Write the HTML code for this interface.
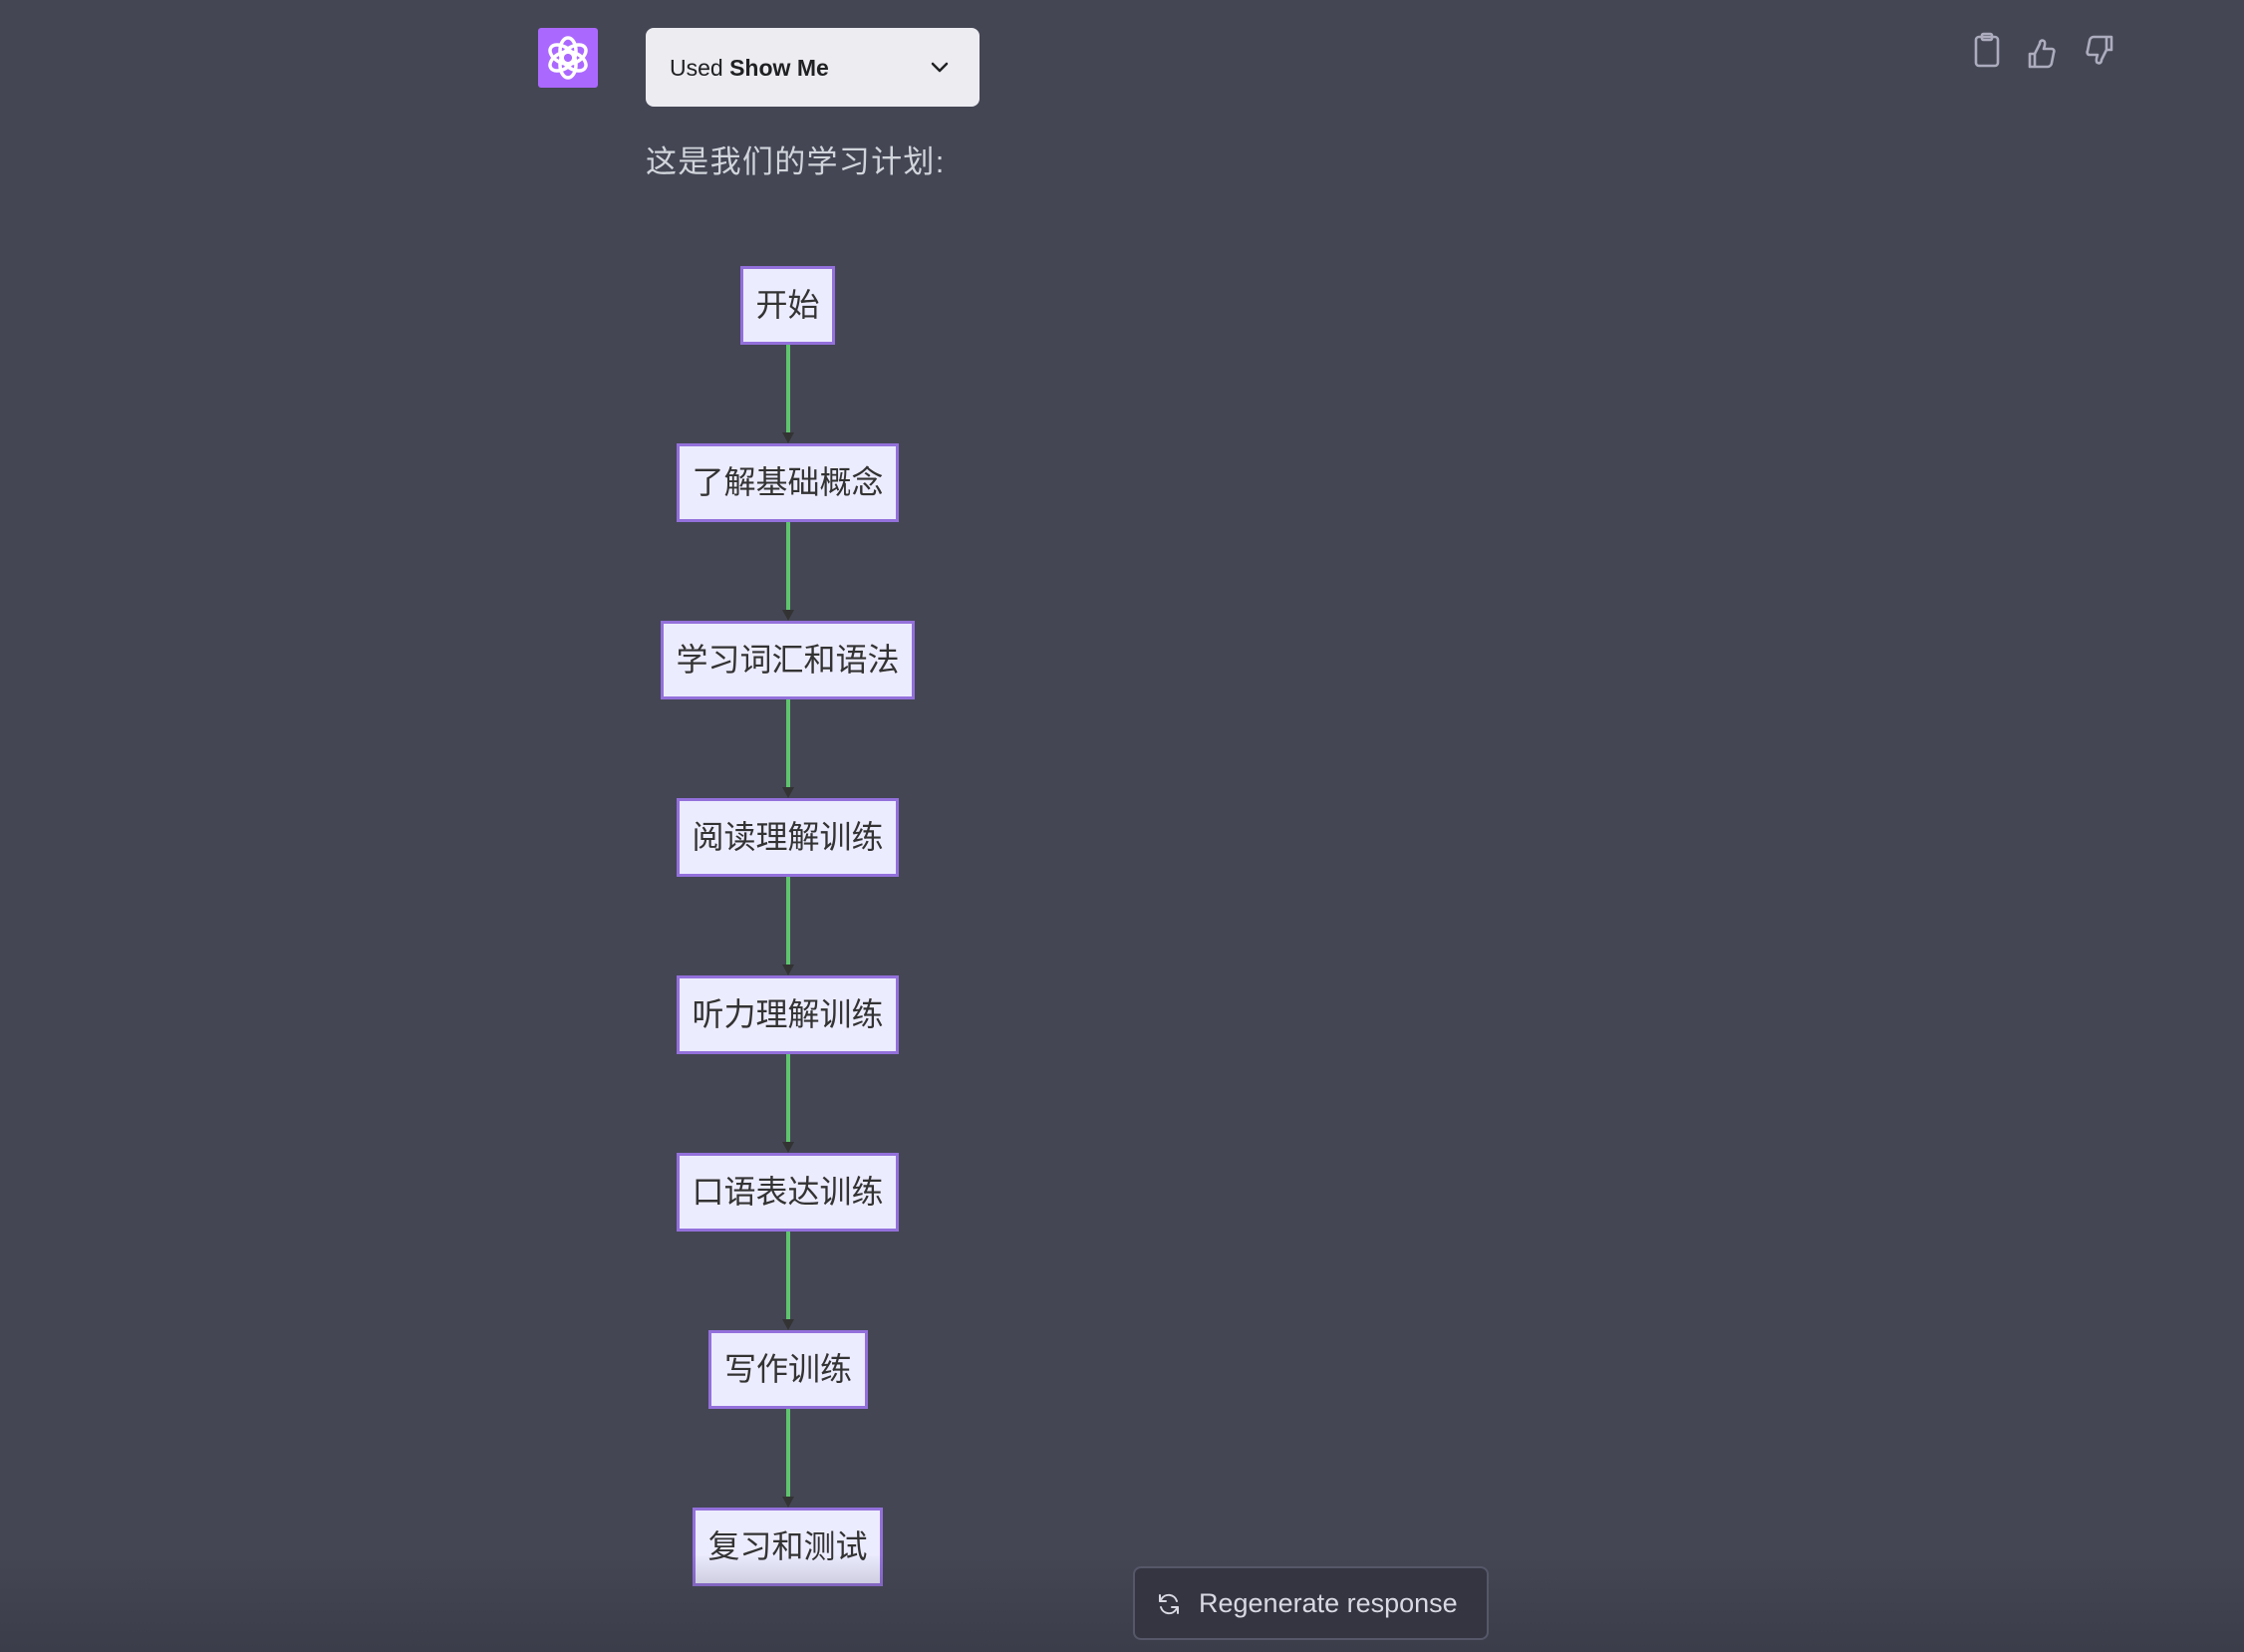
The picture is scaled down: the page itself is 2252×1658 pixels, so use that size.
<!DOCTYPE html>
<html><head><meta charset="utf-8"><style>
*{margin:0;padding:0;box-sizing:border-box}
html,body{width:2252px;height:1658px;overflow:hidden;background:#444654;font-family:"Liberation Sans","Noto Sans CJK SC",sans-serif}
.abs{position:absolute}
.node{position:absolute;height:79px;background:#ECECFF;border:3px solid #9370DB;color:#333;font-size:32px;display:flex;align-items:center;justify-content:center;white-space:nowrap;padding-bottom:5px}
.line{position:absolute;left:789px;width:4px;background:#5fc46e}
.arrow{position:absolute;left:785px;width:0;height:0;border-left:6px solid transparent;border-right:6px solid transparent;border-top:11px solid #333}
</style></head><body>
<div class="abs" style="left:540px;top:28px;width:60px;height:60px;background:#ab68ff;border-radius:3px">
<svg width="60" height="60" viewBox="0 0 60 60"><g fill="none" stroke="#fff" stroke-width="3.5">
<ellipse cx="30" cy="23" rx="8" ry="13" transform="rotate(0 30 30)"/>
<ellipse cx="30" cy="23" rx="8" ry="13" transform="rotate(60 30 30)"/>
<ellipse cx="30" cy="23" rx="8" ry="13" transform="rotate(120 30 30)"/>
<ellipse cx="30" cy="23" rx="8" ry="13" transform="rotate(180 30 30)"/>
<ellipse cx="30" cy="23" rx="8" ry="13" transform="rotate(240 30 30)"/>
<ellipse cx="30" cy="23" rx="8" ry="13" transform="rotate(300 30 30)"/>
</g></svg></div>
<div class="abs" style="left:648px;top:28px;width:335px;height:79px;background:#ececf1;border-radius:8px;color:#202123;font-size:23px;line-height:81px;padding-left:24px">Used <b>Show Me</b>
<svg class="abs" style="left:283px;top:28px" width="24" height="24" viewBox="0 0 24 24"><path d="M5 8l7 7 7-7" fill="none" stroke="#202123" stroke-width="2.5" stroke-linecap="round" stroke-linejoin="round"/></svg></div>
<div class="abs" style="left:648px;top:137px;font-size:31px;color:#d1d5db;letter-spacing:1.3px">这是我们的学习计划:</div>
<svg class="abs" style="left:1975px;top:30px" width="150" height="44" viewBox="0 0 150 44" fill="none" stroke="#acacbe" stroke-width="2.6" stroke-linejoin="round" stroke-linecap="round">
<rect x="8" y="7" width="22" height="29" rx="3"/><rect x="14" y="4" width="10" height="6" rx="1.5"/>
<path d="M62 37V24h5v13zM67 24l5-10c0-3 2-4 4-3 2 1 1 5 0 8h8c2 0 3 2 2 4l-2 10c0 2-2 4-4 4H67"/>
<path d="M144 7v13h-5V7zM139 20l-5 10c0 3-2 4-4 3-2-1-1-5 0-8h-8c-2 0-3-2-2-4l2-10c0-2 2-4 4-4h13"/>
</svg>
<div class="node" style="left:743px;top:267px;width:95px">开始</div>
<div class="line" style="top:346px;height:88px"></div><div class="arrow" style="top:434px"></div>
<div class="node" style="left:679px;top:445px;width:223px">了解基础概念</div>
<div class="line" style="top:524px;height:88px"></div><div class="arrow" style="top:612px"></div>
<div class="node" style="left:663px;top:623px;width:255px">学习词汇和语法</div>
<div class="line" style="top:702px;height:88px"></div><div class="arrow" style="top:790px"></div>
<div class="node" style="left:679px;top:801px;width:223px">阅读理解训练</div>
<div class="line" style="top:880px;height:88px"></div><div class="arrow" style="top:968px"></div>
<div class="node" style="left:679px;top:979px;width:223px">听力理解训练</div>
<div class="line" style="top:1058px;height:88px"></div><div class="arrow" style="top:1146px"></div>
<div class="node" style="left:679px;top:1157px;width:223px">口语表达训练</div>
<div class="line" style="top:1236px;height:88px"></div><div class="arrow" style="top:1324px"></div>
<div class="node" style="left:711px;top:1335px;width:160px">写作训练</div>
<div class="line" style="top:1414px;height:88px"></div><div class="arrow" style="top:1502px"></div>
<div class="node" style="left:695px;top:1513px;width:191px">复习和测试</div>
<div class="abs" style="left:0;top:1560px;width:2252px;height:98px;background:linear-gradient(rgba(52,53,65,0),rgba(52,53,65,0.55))"></div>
<div class="abs" style="left:1137px;top:1572px;width:357px;height:74px;background:#343541;border:2px solid #565869;border-radius:8px;color:#d9d9e3;font-size:27px;line-height:70px;padding-left:64px">Regenerate response
<svg class="abs" style="left:22px;top:24px" width="24" height="24" viewBox="0 0 24 24" fill="none" stroke="#d9d9e3" stroke-width="2" stroke-linecap="round" stroke-linejoin="round"><path d="M3 3v6h6M21 21v-6h-6"/><path d="M20 9A8.5 8.5 0 0 0 4.5 7L3 9M4 15a8.5 8.5 0 0 0 15.5 2l1.5-2"/></svg></div>
</body></html>
